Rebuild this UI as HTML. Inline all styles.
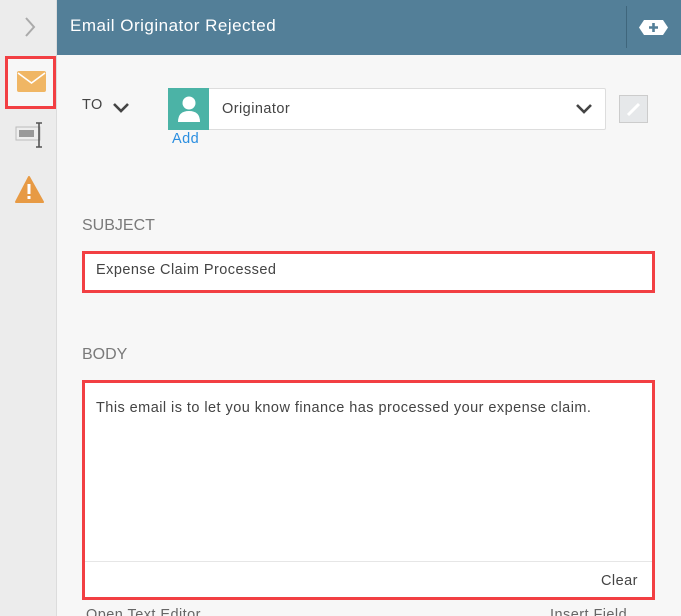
<!DOCTYPE html>
<html><head><meta charset="utf-8"><style>
*{box-sizing:border-box;margin:0;padding:0}
html,body{width:681px;height:616px;overflow:hidden}
body{background:#f7f7f7;font-family:"Liberation Sans",sans-serif;position:relative;color:#444}
.side{position:absolute;left:0;top:0;width:57px;height:616px;background:#ececec;border-right:1px solid #dcdcdc}
.hdr{position:absolute;left:57px;top:0;width:624px;height:55px;background:#537f98;color:#fff;font-size:17px;letter-spacing:.5px}
.abs{position:absolute}
.lbl{position:absolute;color:#7a7a7a;font-size:16px}
.box{position:absolute;background:#fff;border:3px solid #f23f43}
.t{font-size:14.5px;letter-spacing:.45px;color:#444}
</style></head><body>
<div class="side">
 <svg class="abs" style="left:23px;top:16px" width="14" height="22"><path d="M3 2 L11 11 L3 20" stroke="#aaa" stroke-width="2" fill="none"/></svg>
 <div class="abs" style="left:5px;top:56px;width:51px;height:53px;border:3px solid #f23f43;background:#f7f7f7"></div>
 <svg class="abs" style="left:17px;top:71px" width="30" height="22"><rect x="0" y="0" width="29" height="21" rx="2" fill="#f0b664"/><path d="M1 2 L14.5 12 L28 2" stroke="#fff" stroke-width="1.6" fill="none"/></svg>
 <svg class="abs" style="left:15px;top:120px" width="30" height="30"><rect x="1" y="7" width="24" height="13" fill="#eee" stroke="#bbb"/><rect x="4" y="10" width="15" height="7" fill="#999"/><path d="M21 3h6M24 3v24M21 27h6" stroke="#555" stroke-width="1.6"/></svg>
 <svg class="abs" style="left:15px;top:176px" width="30" height="28"><path d="M14 1 L28 26 L1 26 Z" fill="#e79a44" stroke="#e79a44" stroke-linejoin="round" stroke-width="2"/><rect x="12.5" y="8" width="3" height="10" fill="#fff"/><rect x="12.5" y="20" width="3" height="3" fill="#fff"/></svg>
</div>
<div class="hdr">
 <div class="abs" style="left:13px;top:16px">Email Originator Rejected</div>
 <div class="abs" style="left:569px;top:6px;width:1px;height:42px;background:#3f667c"></div>
 <svg class="abs" style="left:582px;top:19px" width="30" height="17"><path d="M5 1 H24 L29 8.5 L24 16 H5 L0 8.5 Z" fill="#fff"/><path d="M14.5 4v9M10 8.5h9" stroke="#537f98" stroke-width="2.6"/></svg>
</div>
<div class="abs t" style="left:82px;top:97px">TO</div>
<svg class="abs" style="left:112px;top:102px" width="18" height="12"><path d="M2 2 L9 9 L16 2" stroke="#444" stroke-width="2.6" fill="none"/></svg>
<div class="abs" style="left:168px;top:88px;width:438px;height:42px;background:#fff;border:1px solid #ddd;border-radius:2px"></div>
<div class="abs" style="left:168px;top:88px;width:41px;height:42px;background:#4bb3a6"></div>
<svg class="abs" style="left:176px;top:94px" width="26" height="30"><circle cx="13" cy="9" r="6.5" fill="#fff"/><path d="M2 28 Q2 17 13 17 Q24 17 24 28 Z" fill="#fff"/></svg>
<div class="abs t" style="left:222px;top:101px">Originator</div>
<svg class="abs" style="left:575px;top:103px" width="18" height="12"><path d="M2 2 L9 9 L16 2" stroke="#444" stroke-width="2.6" fill="none"/></svg>
<div class="abs" style="left:619px;top:95px;width:29px;height:28px;background:#e6e8ea;border:1px solid #ccc"></div>
<svg class="abs" style="left:624px;top:99px" width="20" height="20"><path d="M4 16 L15 5" stroke="#fff" stroke-width="3"/></svg>
<div class="abs t" style="left:172px;top:131px;color:#2a8ee0">Add</div>
<div class="lbl" style="left:82px;top:217px">SUBJECT</div>
<div class="box" style="left:82px;top:251px;width:573px;height:42px"></div>
<div class="abs t" style="left:96px;top:262px">Expense Claim Processed</div>
<div class="lbl" style="left:82px;top:346px">BODY</div>
<div class="box" style="left:82px;top:380px;width:573px;height:220px"></div>
<div class="abs" style="left:85px;top:561px;width:567px;height:1px;background:#e6e6e6"></div>
<div class="abs t" style="left:96px;top:400px">This email is to let you know finance has processed your expense claim.</div>
<div class="abs t" style="left:601px;top:573px">Clear</div>
<div class="abs t" style="left:86px;top:607px;color:#666">Open Text Editor</div>
<div class="abs t" style="left:550px;top:607px;color:#666">Insert Field</div>
</body></html>
